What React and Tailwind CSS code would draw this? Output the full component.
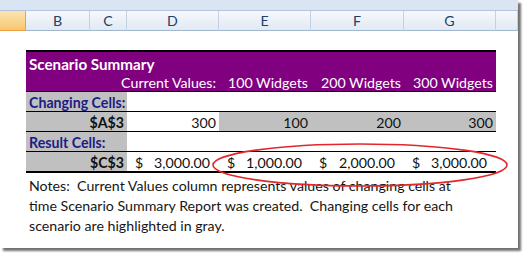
import React from "react";

const font = { fontFamily: "Lato, 'Open Sans', sans-serif" };

const cols = [
  { k: "", w: "w-[26px]" },
  { k: "B", w: "w-[64px]" },
  { k: "C", w: "w-[37px]" },
  { k: "D", w: "w-[92px]" },
  { k: "E", w: "w-[92px]" },
  { k: "F", w: "w-[93px]" },
  { k: "G", w: "w-[92px]" },
  { k: "", w: "w-[22px]" },
];

const ColumnHeaders = () => (
  <div className="flex h-[20px]">
    {cols.map((c, i) =>
      i === 0 ? (
        <div
          key={i}
          className="w-[26px] shrink-0 h-full bg-gradient-to-b from-[#fde3b2] to-[#f7c76c] border-r border-b border-[#f0a040]"
        />
      ) : (
        <div
          key={i}
          className={`${c.w} shrink-0 h-full flex items-center justify-center border-r border-b border-r-[#c2d2e4] border-b-[#9fb6cf] bg-gradient-to-b from-[#f6f8fc] to-[#e2e9f3] text-[14.2px] text-[#22416a]`}
        >
          {c.k}
        </div>
      )
    )}
  </div>
);

// cell text in the sheet sits toward the bottom of its row
const Label = ({ children, right, blue }) => (
  <div
    className={`w-[101px] shrink-0 h-full bg-[#c0c0c0] flex items-center pt-[3px] px-[3px] font-bold whitespace-nowrap ${
      right ? "justify-end" : ""
    } ${blue ? "text-[#1c1c84]" : "text-[#111]"}`}
  >
    {children}
  </div>
);

const Num = ({ children, w, gray }) => (
  <div
    className={`${w} shrink-0 h-full flex items-center justify-end pt-[3px] pr-[3px] whitespace-nowrap ${
      gray ? "bg-[#c0c0c0]" : ""
    }`}
  >
    {children}
  </div>
);

const Money = ({ v, w }) => (
  <div className={`${w} shrink-0 h-full flex items-center justify-between pt-[3px] pl-[8px] pr-[9px] whitespace-nowrap`}>
    <span>$</span>
    <span>{v}</span>
  </div>
);

const ScenarioTable = () => (
  <div className="ml-[26px] w-[470px] text-[14.2px] text-[#111]">
    <div className="border-t-2 border-black bg-[#800080] text-white">
      <div className="h-[20px] flex items-center pt-[4px] px-[3px] font-bold text-[15.2px] whitespace-nowrap">
        Scenario Summary
      </div>
      <div className="h-[20px] flex border-b border-black">
        <div className="w-[101px] shrink-0" />
        <Num w="w-[92px]">Current Values:</Num>
        <Num w="w-[92px]">100 Widgets</Num>
        <Num w="w-[93px]">200 Widgets</Num>
        <Num w="w-[92px]">300 Widgets</Num>
      </div>
    </div>
    <div className="h-[20px] flex border-b border-black">
      <Label blue>Changing Cells:</Label>
    </div>
    <div className="h-[20px] flex border-b border-black">
      <Label right>$A$3</Label>
      <Num w="w-[92px]">300</Num>
      <Num w="w-[92px]" gray>100</Num>
      <Num w="w-[93px]" gray>200</Num>
      <Num w="w-[92px]" gray>300</Num>
    </div>
    <div className="h-[20px] flex border-b border-black">
      <Label blue>Result Cells:</Label>
    </div>
    <div className="h-[21px] flex border-b-2 border-black">
      <Label right>$C$3</Label>
      <Money w="w-[92px]" v="3,000.00" />
      <Money w="w-[92px]" v="1,000.00" />
      <Money w="w-[93px]" v="2,000.00" />
      <Money w="w-[92px]" v="3,000.00" />
    </div>
    <div className="pl-[3px] pt-[3px] leading-[20px] whitespace-pre text-[#161616]">
      <div>Notes:  Current Values column represents values of changing cells at</div>
      <div>time Scenario Summary Report was created.  Changing cells for each</div>
      <div>scenario are highlighted in gray.</div>
    </div>
  </div>
);

export default function App() {
  return (
    <div className="w-[524px] h-[254px] bg-white overflow-hidden" style={font}>
      <div className="relative w-[518px] h-[248px] bg-white shadow-[3px_3px_2px_rgba(0,0,0,0.55)]">
        <div className="h-[11px] bg-[#dae5f3] border-b border-[#b4c6dc]" />
        <ColumnHeaders />
        <div className="h-[19px]" />
        <ScenarioTable />
        <svg className="absolute left-0 top-0 pointer-events-none" width="518" height="248">
          <ellipse cx="360" cy="165" rx="147" ry="21" fill="none" stroke="#e3262b" strokeWidth="1.6" />
        </svg>
      </div>
    </div>
  );
}
